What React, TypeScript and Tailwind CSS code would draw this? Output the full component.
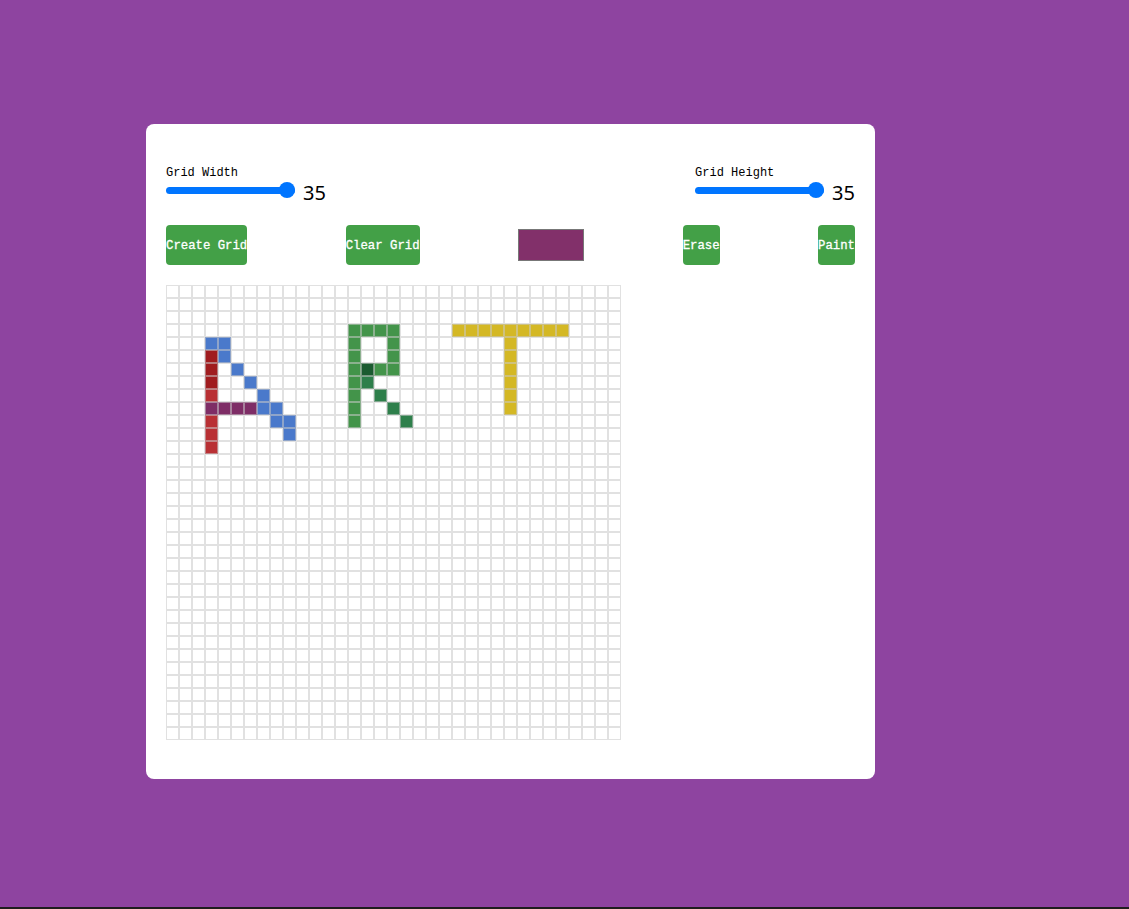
import { useState } from "react";

const SIZE = 35;

// painted cells: "row,col" -> colour
const PAINT: Record<string, string> = {};
function put(r: number, cols: number[], c: string) {
  cols.forEach((x) => (PAINT[`${r},${x}`] = c));
}

const BLUE = "#4a79cb";
const DRED = "#a01c1f";
const RED = "#b93034";
const PURP = "#7e2d66";
const GRN = "#43944a";
const DGRN = "#1b5b30";
const MGRN = "#2e7f4b";
const YEL = "#d4b825";

// A
put(4, [3, 4], BLUE);
put(5, [3], DRED);
put(5, [4], BLUE);
put(6, [3], DRED);
put(6, [5], BLUE);
put(7, [3], DRED);
put(7, [6], BLUE);
put(8, [3], RED);
put(8, [7], BLUE);
put(9, [3, 4, 5, 6], PURP);
put(9, [7, 8], BLUE);
put(10, [3], RED);
put(10, [8, 9], BLUE);
put(11, [3], RED);
put(11, [9], BLUE);
put(12, [3], RED);

// R
put(3, [14, 15, 16, 17], GRN);
put(4, [14, 17], GRN);
put(5, [14, 17], GRN);
put(6, [14, 16, 17], GRN);
put(6, [15], DGRN);
put(7, [14], GRN);
put(7, [15], MGRN);
put(8, [14], GRN);
put(8, [16], MGRN);
put(9, [14], GRN);
put(9, [17], MGRN);
put(10, [14], GRN);
put(10, [18], MGRN);

// T
put(3, [22, 23, 24, 25, 26, 27, 28, 29, 30], YEL);
[4, 5, 6, 7, 8, 9].forEach((r) => put(r, [26], YEL));

function Slider({ label, value }: { label: string; value: number }) {
  return (
    <div className="flex flex-col">
      <div className="text-[12px] leading-4 text-black">{label}</div>
      <div className="flex items-start">
        <div className="relative mt-[1px] h-4 w-[129px]">
          <div className="absolute left-0 right-0 top-[4.5px] h-[7px] rounded-full bg-[#0075ff]" />
          <div className="absolute right-0 top-0 h-4 w-4 rounded-full bg-[#0075ff]" />
        </div>
        <span className="ml-2 text-[20px] leading-6 text-black font-['Noto_Sans',sans-serif]">
          {value}
        </span>
      </div>
    </div>
  );
}

function Btn({ children }: { children: string }) {
  return (
    <button
      type="button"
      className="h-10 rounded-[4px] bg-[#43a047] px-0 pt-[3px] text-[12.3px] font-normal text-white [-webkit-text-stroke:0.3px_white]"
    >
      {children}
    </button>
  );
}

export default function App() {
  const [color] = useState("#82306a");

  return (
    <div className="flex h-[909px] flex-col font-['Liberation_Mono',monospace]">
      <div className="flex-1 bg-[#8e44a0] pl-[146px] pt-[124px]">
        <div className="w-[729px] rounded-[8px] bg-white px-5 pt-[41px] pb-[39px]">
          <div className="flex items-start justify-between">
            <Slider label="Grid Width" value={SIZE} />
            <Slider label="Grid Height" value={SIZE} />
          </div>

          <div className="mt-5 flex items-center justify-between">
            <Btn>Create Grid</Btn>
            <Btn>Clear Grid</Btn>
            <div className="h-8 w-[66px] border border-[#777]" style={{ backgroundColor: color }} />
            <Btn>Erase</Btn>
            <Btn>Paint</Btn>
          </div>

          <div className="mt-5 grid w-[455px] grid-cols-[repeat(35,13px)]">
            {Array.from({ length: SIZE * SIZE }).map((_, i) => {
              const r = Math.floor(i / SIZE);
              const c = i % SIZE;
              const fill = PAINT[`${r},${c}`];
              return (
                <div
                  key={i}
                  className="h-[13px] w-[13px] border border-[rgba(200,200,200,0.55)]"
                  style={fill ? { backgroundColor: fill } : undefined}
                />
              );
            })}
          </div>
        </div>
      </div>
      <div className="h-[2px] bg-[#1e1e1e]" />
    </div>
  );
}
